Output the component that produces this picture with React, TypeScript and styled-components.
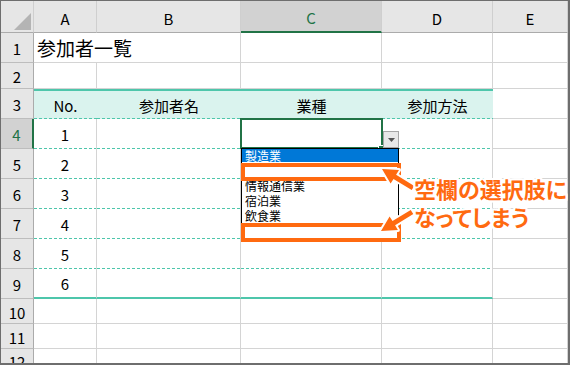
import styled, { createGlobalStyle } from "styled-components";

const GREEN = "#217346";
const TEAL = "#4ec6ab";
const TEAL_FILL = "#daf3ee";
const ORANGE = "#ff6a10";
const GRID = "#d4d4d4";
const FONT = `"Noto Sans CJK JP", "Noto Sans", sans-serif`;

type Band = "none" | "head" | "body" | "last";

const GlobalStyle = createGlobalStyle`
  body {
    margin: 0;
    background: #fff;
    font-family: ${FONT};
  }
`;

const Frame = styled.div`
  position: relative;
  width: 570px;
  height: 365px;
  box-sizing: border-box;
  border: 1px solid #6e6e6e;
  border-right-width: 2px;
  border-bottom-width: 2px;
  overflow: hidden;
  background: #fff;
`;

const Sheet = styled.div`
  display: grid;
  grid-template-columns: 33px 63px 144px 141px 111px 1fr;
  grid-template-rows: 32px 30px 26px repeat(7, 30px) 25px 25px 1fr;
  height: 100%;
`;

const Corner = styled.div`
  display: flex;
  align-items: flex-end;
  justify-content: flex-end;
  box-sizing: border-box;
  padding: 0 2px 2px 0;
  background: #e6e6e6;
  border-right: 1px solid #cfcfcf;
  border-bottom: 1px solid #ababab;
`;

const SelectAll = styled.span`
  width: 17px;
  height: 17px;
  background: #b4b4b4;
  clip-path: polygon(100% 0, 100% 100%, 0 100%);
`;

const ColHead = styled.div<{ $selected?: boolean }>`
  display: flex;
  align-items: center;
  justify-content: center;
  box-sizing: border-box;
  padding-top: 3px;
  font-size: 15px;
  color: ${(p) => (p.$selected ? GREEN : "#000")};
  background: ${(p) => (p.$selected ? "#d2d2d2" : "#e6e6e6")};
  border-right: 1px solid #cfcfcf;
  border-bottom: ${(p) => (p.$selected ? `2px solid ${GREEN}` : "1px solid #ababab")};
`;

const RowHead = styled.div<{ $selected?: boolean }>`
  display: flex;
  align-items: center;
  justify-content: center;
  box-sizing: border-box;
  padding-top: 2px;
  font-size: 15px;
  color: ${(p) => (p.$selected ? GREEN : "#000")};
  background: ${(p) => (p.$selected ? "#d2d2d2" : "#e6e6e6")};
  border-right: ${(p) => (p.$selected ? `2px solid ${GREEN}` : "1px solid #ababab")};
  border-bottom: 1px solid #bdbdbd;
`;

const dashed = `repeating-linear-gradient(90deg, ${TEAL} 0 3px, transparent 3px 5px) left bottom / 100% 1px no-repeat`;

const Cell = styled.div<{ $band?: Band; $center?: boolean; $span?: number; $size?: number }>`
  display: flex;
  align-items: center;
  justify-content: ${(p) => (p.$center ? "center" : "flex-start")};
  box-sizing: border-box;
  grid-column: span ${(p) => p.$span ?? 1};
  padding: 0 3px;
  font-size: ${(p) => p.$size ?? 15}px;
  color: #000;
  white-space: nowrap;
  border-right: ${(p) => (p.$band === "head" ? "none" : `1px solid ${GRID}`)};
  border-top: ${(p) => (p.$band === "head" ? `2px solid ${TEAL}` : "none")};
  border-bottom: ${(p) => {
    switch (p.$band) {
      case "head":
      case "body":
        return "none";
      case "last":
        return `2px solid ${TEAL}`;
      default:
        return `1px solid ${GRID}`;
    }
  }};
  background: ${(p) => {
    switch (p.$band) {
      case "head":
        return `${dashed}, ${TEAL_FILL}`;
      case "body":
        return dashed;
      default:
        return "#fff";
    }
  }};
`;

/* ---------- overlays ---------- */

const Selection = styled.div`
  position: absolute;
  left: 239px;
  top: 117px;
  width: 143px;
  height: 31px;
  box-sizing: border-box;
  border: 2px solid ${GREEN};
`;

const FillHandle = styled.div`
  position: absolute;
  left: 377px;
  top: 144px;
  width: 5px;
  height: 5px;
  background: ${GREEN};
  border: 1px solid #fff;
`;

const DropButton = styled.div`
  position: absolute;
  left: 382px;
  top: 130px;
  width: 16px;
  height: 17px;
  box-sizing: border-box;
  display: flex;
  align-items: center;
  justify-content: center;
  background: #e8e8e8;
  border: 1px solid #a6a6a6;
`;

const List = styled.ul`
  position: absolute;
  left: 240px;
  top: 147px;
  width: 158px;
  height: 93px;
  box-sizing: border-box;
  margin: 0;
  padding: 0;
  list-style: none;
  background: #fff;
  border: 1px solid #000;
`;

const Option = styled.li<{ $active?: boolean }>`
  height: 15px;
  padding-left: 3px;
  font-size: 12px;
  line-height: 14px;
  color: ${(p) => (p.$active ? "#fff" : "#000")};
  background: ${(p) =>
    p.$active ? "linear-gradient(#0078d7 0 13px, transparent 13px)" : "transparent"};
`;

const Mark = styled.div<{ $top: number; $height: number }>`
  position: absolute;
  left: 240px;
  top: ${(p) => p.$top}px;
  width: 160px;
  height: ${(p) => p.$height}px;
  box-sizing: border-box;
  border: 4px solid ${ORANGE};
`;

const Arrows = styled.svg`
  position: absolute;
  left: 369px;
  top: 159px;
  width: 50px;
  height: 85px;
  overflow: visible;
`;

const Note = styled.div`
  position: absolute;
  left: 413px;
  top: 173px;
  font-size: 22px;
  font-weight: 700;
  line-height: 28px;
  color: ${ORANGE};
  font-feature-settings: "palt";
  white-space: nowrap;
  text-shadow:
    2px 0 #fff, -2px 0 #fff, 0 2px #fff, 0 -2px #fff,
    2px 2px #fff, -2px -2px #fff, 2px -2px #fff, -2px 2px #fff;
`;

const columns = ["A", "B", "C", "D", "E"];
const options = ["製造業", "", "情報通信業", "宿泊業", "飲食業", ""];

export default function App() {
  const bodyRows = [1, 2, 3, 4, 5, 6];

  return (
    <>
      <GlobalStyle />
      <Frame>
        <Sheet>
          <Corner>
            <SelectAll />
          </Corner>
          {columns.map((c) => (
            <ColHead key={c} $selected={c === "C"}>
              {c}
            </ColHead>
          ))}

          <RowHead>1</RowHead>
          <Cell $span={2} $size={19}>
            参加者一覧
          </Cell>
          <Cell />
          <Cell />
          <Cell />

          <RowHead>2</RowHead>
          {columns.map((c) => (
            <Cell key={c} />
          ))}

          <RowHead>3</RowHead>
          <Cell $band="head" $center>No.</Cell>
          <Cell $band="head" $center>参加者名</Cell>
          <Cell $band="head" $center>業種</Cell>
          <Cell $band="head" $center>参加方法</Cell>
          <Cell />

          {bodyRows.map((n) => {
            const band: Band = n === 6 ? "last" : "body";
            return [
              <RowHead key={`h${n}`} $selected={n === 1}>
                {n + 3}
              </RowHead>,
              <Cell key={`a${n}`} $band={band} $center>
                {n}
              </Cell>,
              <Cell key={`b${n}`} $band={band} />,
              <Cell key={`c${n}`} $band={band} />,
              <Cell key={`d${n}`} $band={band} />,
              <Cell key={`e${n}`} />,
            ];
          })}

          {[10, 11, 12].map((n) => [
            <RowHead key={`h${n}`}>{n}</RowHead>,
            ...columns.map((c) => <Cell key={`${c}${n}`} />),
          ])}
        </Sheet>

        <Selection />
        <FillHandle />
        <DropButton>
          <svg width="7" height="4" viewBox="0 0 7 4">
            <path d="M0 0H7L3.5 4Z" fill="#555" />
          </svg>
        </DropButton>
        <List>
          {options.map((o, i) => (
            <Option key={i} $active={i === 0}>
              {o}
            </Option>
          ))}
        </List>

        <Mark $top={162} $height={18} />
        <Mark $top={222} $height={19} />

        <Arrows viewBox="370 160 50 85">
          <g fill={ORANGE} stroke="#fff" strokeWidth="4" strokeLinejoin="round" paintOrder="stroke">
            <polygon points="382,169 399,170 396.1,174.7 414.3,185.9 411.7,190.1 393.5,178.9 390.6,183.6" />
            <polygon points="381,231 397.9,230 395.1,225.3 413.3,214.1 410.7,209.9 392.5,221.1 389.6,216.4" />
          </g>
        </Arrows>

        <Note>
          空欄の選択肢に
          <br />
          なってしまう
        </Note>
      </Frame>
    </>
  );
}
